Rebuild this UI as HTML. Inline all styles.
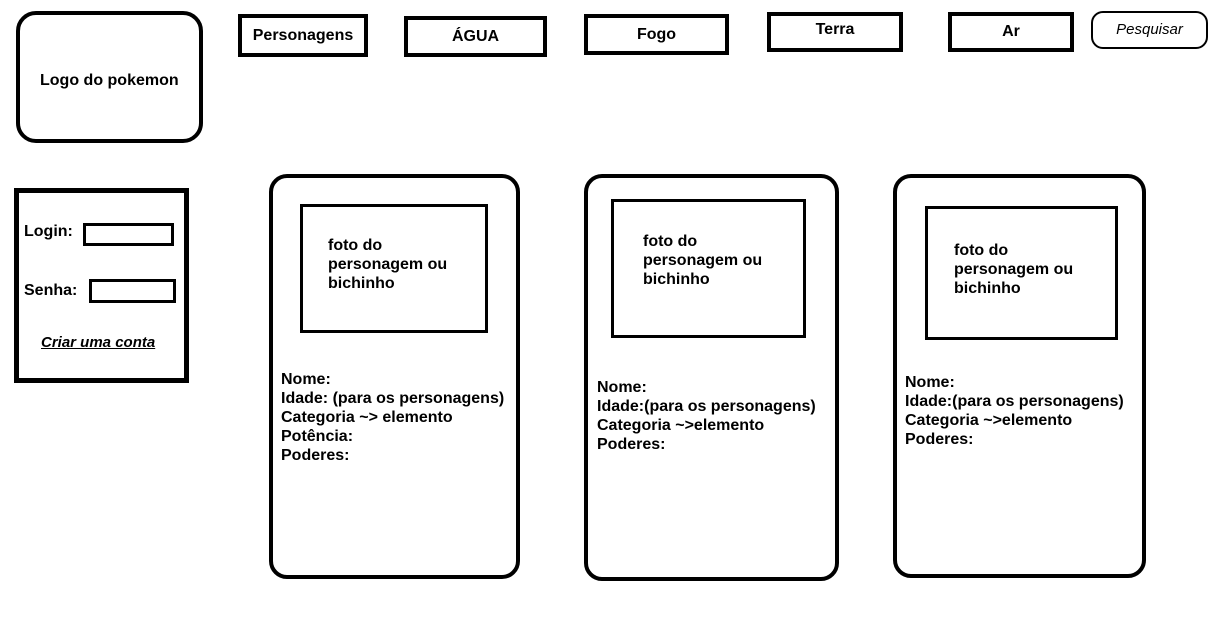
<!DOCTYPE html>
<html><head><meta charset="utf-8"><style>
*{margin:0;padding:0;box-sizing:border-box}
body{width:1224px;height:618px;background:#fff;position:relative;overflow:hidden;font-family:"Liberation Sans",Arial,sans-serif;font-weight:bold;font-size:16px;color:#000}
.b{position:absolute;border:4px solid #000}
.t{position:absolute;white-space:nowrap;line-height:19px}
.btn{position:absolute;border:4px solid #000;display:flex;align-items:center;justify-content:center}
</style></head><body>
<div class="b" style="left:16px;top:11px;width:187px;height:132px;border-radius:20px"></div>
<div class="t" style="left:40px;top:71px">Logo do pokemon</div>

<div class="btn" style="left:238px;top:14px;width:130px;height:43px">Personagens</div>
<div class="btn" style="left:404px;top:16px;width:143px;height:41px">ÁGUA</div>
<div class="btn" style="left:584px;top:14px;width:145px;height:41px">Fogo</div>
<div class="btn" style="left:767px;top:12px;width:136px;height:40px;padding-bottom:4px">Terra</div>
<div class="btn" style="left:948px;top:12px;width:126px;height:40px">Ar</div>
<div class="btn" style="left:1091px;top:11px;width:117px;height:38px;border-width:2px;border-radius:12px;font-weight:normal;font-style:italic;font-size:15px;padding-bottom:2px">Pesquisar</div>

<div class="b" style="left:14px;top:188px;width:175px;height:195px;border-width:5px"></div>
<div class="t" style="left:24px;top:222px">Login:</div>
<div class="b" style="left:83px;top:223px;width:91px;height:23px;border-width:3px"></div>
<div class="t" style="left:24px;top:281px">Senha:</div>
<div class="b" style="left:89px;top:279px;width:87px;height:24px;border-width:3px"></div>
<div class="t" style="left:41px;top:333px;font-style:italic;text-decoration:underline;font-size:15px">Criar uma conta</div>

<div class="b" style="left:269px;top:174px;width:251px;height:405px;border-radius:18px"></div>
<div class="b" style="left:300px;top:204px;width:188px;height:129px;border-width:3px"></div>
<div class="t" style="left:328px;top:236px">foto do<br>personagem ou<br>bichinho</div>
<div class="t" style="left:281px;top:370px">Nome:<br>Idade: (para os personagens)<br>Categoria ~&gt; elemento<br>Potência:<br>Poderes:</div>

<div class="b" style="left:584px;top:174px;width:255px;height:407px;border-radius:18px"></div>
<div class="b" style="left:611px;top:199px;width:195px;height:139px;border-width:3px"></div>
<div class="t" style="left:643px;top:232px">foto do<br>personagem ou<br>bichinho</div>
<div class="t" style="left:597px;top:378px">Nome:<br>Idade:(para os personagens)<br>Categoria ~&gt;elemento<br>Poderes:</div>

<div class="b" style="left:893px;top:174px;width:253px;height:404px;border-radius:18px"></div>
<div class="b" style="left:925px;top:206px;width:193px;height:134px;border-width:3px"></div>
<div class="t" style="left:954px;top:241px">foto do<br>personagem ou<br>bichinho</div>
<div class="t" style="left:905px;top:373px">Nome:<br>Idade:(para os personagens)<br>Categoria ~&gt;elemento<br>Poderes:</div>
</body></html>
